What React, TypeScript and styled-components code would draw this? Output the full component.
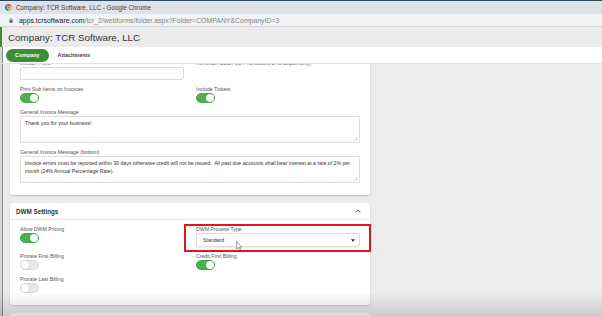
import React from "react";
import styled, { createGlobalStyle } from "styled-components";

const Global = createGlobalStyle`
  html, body { margin: 0; padding: 0; }
  body {
    width: 602px;
    height: 316px;
    overflow: hidden;
    font-family: "Liberation Sans", Arial, sans-serif;
    background: #ececec;
  }
  * { box-sizing: border-box; }
`;

const Window = styled.div`
  width: 602px;
  height: 316px;
  display: flex;
  flex-direction: column;
  overflow: hidden;
  background: #ececec;
`;

const TitleBar = styled.div`
  flex: none;
  height: 14px;
  background: #dee1e6;
  border-top: 1px solid #2f4a66;
  display: flex;
  align-items: center;
  gap: 4px;
  padding-left: 5px;
  font-size: 6.3px;
  color: #3c4043;
`;

const AddressBar = styled.div`
  flex: none;
  height: 13px;
  background: #f1f3f4;
  border-bottom: 1px solid #d6d6d6;
  display: flex;
  align-items: center;
  gap: 6px;
  padding-left: 9px;
  font-size: 6.9px;
  color: #80868b;
`;

const Host = styled.span`
  color: #202124;
`;

const PageHeader = styled.div`
  flex: none;
  height: 20px;
  background: #ebebeb;
  display: flex;
  align-items: center;
  padding-left: 8px;
  font-size: 9.8px;
  color: #333;
  box-shadow: inset 2px 0 0 #3b8f35;
`;

const TabBar = styled.div`
  flex: none;
  height: 17px;
  background: #fff;
  display: flex;
  align-items: center;
  gap: 9px;
  padding-left: 6px;
  border-bottom: 1px solid #e2e2e2;
  box-shadow: inset 2px 0 0 #d5d5d5, inset 3px 0 0 #8a8a8a;
`;

const Tab = styled.span<{ $active?: boolean }>`
  height: 13px;
  display: inline-flex;
  align-items: center;
  justify-content: center;
  padding: ${(p) => (p.$active ? "0 9px" : "0")};
  border-radius: 7px;
  background: ${(p) => (p.$active ? "#3b8f35" : "transparent")};
  color: ${(p) => (p.$active ? "#fff" : "#444")};
  font-size: 5.4px;
  font-weight: bold;
`;

const Content = styled.div`
  flex: 1;
  position: relative;
  overflow: hidden;
  padding-left: 10px;
  box-shadow: inset 2px 0 0 #d5d5d5, inset 3px 0 0 #8a8a8a;

  &::after {
    content: "";
    position: absolute;
    left: 0;
    right: 0;
    bottom: 0;
    height: 24px;
    background: linear-gradient(to bottom, rgba(0, 0, 0, 0), rgba(0, 0, 0, 0.14));
    pointer-events: none;
  }
`;

const Column = styled.div`
  width: 360px;
  margin-top: -14px;
  display: flex;
  flex-direction: column;
  gap: 8px;
`;

const Card = styled.section`
  background: #fff;
  border-radius: 2px;
  box-shadow: 0 1px 2px rgba(0, 0, 0, 0.18);
`;

const CardHeader = styled.div`
  height: 17px;
  display: flex;
  align-items: center;
  justify-content: space-between;
  padding: 0 9px 0 6px;
  border-bottom: 1px solid #e6e6e6;
  font-size: 6.3px;
  font-weight: bold;
  color: #333;
`;

const CardBody = styled.div<{ $top: number }>`
  display: grid;
  grid-template-columns: 164px 164px;
  column-gap: 12px;
  row-gap: 6px;
  align-items: start;
  padding: ${(p) => p.$top}px 10px 12px 10px;
`;

const Field = styled.div<{ $wide?: boolean }>`
  position: relative;
  display: flex;
  flex-direction: column;
  align-items: flex-start;
  grid-column: ${(p) => (p.$wide ? "1 / -1" : "auto")};
`;

const Label = styled.div`
  height: 6px;
  line-height: 6px;
  margin-bottom: 1px;
  font-size: 5.2px;
  color: #555;
  white-space: nowrap;
`;

const Input = styled.div`
  width: 100%;
  height: 13px;
  border: 1px solid #dcdcdc;
  border-radius: 2px;
  background: #fff;
`;

const TextArea = styled.div<{ $h: number }>`
  position: relative;
  width: 100%;
  height: ${(p) => p.$h}px;
  border: 1px solid #dcdcdc;
  border-radius: 2px;
  background: #fff;
  padding: 2px 4px;
  font-size: 5.2px;
  line-height: 8px;
  color: #333;
  white-space: pre-wrap;
`;

const Grip = styled.svg`
  position: absolute;
  right: 1px;
  bottom: 1px;
`;

const Select = styled.div`
  position: relative;
  width: 100%;
  height: 14px;
  border: 1px solid #dcdcdc;
  border-radius: 2px;
  background: #fff;
  box-shadow: 0 1px 1px rgba(0, 0, 0, 0.06);
  display: flex;
  align-items: center;
  justify-content: space-between;
  padding: 0 4px 0 6px;
  font-size: 5.2px;
  color: #333;
`;

const Highlight = styled.div`
  position: absolute;
  left: -12px;
  top: -2px;
  width: 187px;
  height: 28px;
  border: 2px solid #e5131c;
  pointer-events: none;
`;

const Pointer = styled.svg`
  position: absolute;
  left: 39px;
  top: 7px;
`;

const Toggle = styled.span<{ $on?: boolean }>`
  position: relative;
  display: block;
  width: 19px;
  height: 10px;
  border-radius: 5px;
  background: ${(p) => (p.$on ? "#4caf50" : "#e8e8e8")};
  border: 1px solid ${(p) => (p.$on ? "#46a54a" : "#dadada")};

  &::after {
    content: "";
    position: absolute;
    top: 0;
    left: ${(p) => (p.$on ? "9px" : "0")};
    width: 8px;
    height: 8px;
    border-radius: 50%;
    background: #fff;
    box-shadow: 0 0 1px rgba(0, 0, 0, 0.3);
  }
`;

const Spacer = styled.div`
  height: 40px;
`;

const Favicon = () => (
  <svg width="7" height="7" viewBox="0 0 24 24">
    <path d="M12 12 L1.61 6 A12 12 0 0 1 22.39 6 Z" fill="#db4437" />
    <path d="M12 12 L22.39 6 A12 12 0 0 1 12 24 Z" fill="#f4c20d" />
    <path d="M12 12 L12 24 A12 12 0 0 1 1.61 6 Z" fill="#0f9d58" />
    <circle cx="12" cy="12" r="5.6" fill="#fff" />
    <circle cx="12" cy="12" r="4.4" fill="#4285f4" />
  </svg>
);

const Lock = () => (
  <svg width="4" height="5" viewBox="0 0 8 10">
    <path d="M2 4.5 V3 A2 2 0 0 1 6 3 V4.5" fill="none" stroke="#5f6368" strokeWidth="1.4" />
    <rect x="0.5" y="4.5" width="7" height="5" rx="0.8" fill="#5f6368" />
  </svg>
);

const ResizeGrip = () => (
  <Grip width="4" height="4" viewBox="0 0 4 4">
    <path d="M0.5 3.8 L3.8 0.5 M2 3.8 L3.8 2" stroke="#999" strokeWidth="0.5" />
  </Grip>
);

const ChevronUp = () => (
  <svg width="6" height="4" viewBox="0 0 6 4">
    <polyline points="0.8,3.4 3,1.2 5.2,3.4" fill="none" stroke="#444" strokeWidth="1" />
  </svg>
);

const Caret = () => (
  <svg width="4" height="3" viewBox="0 0 4 3">
    <path d="M0 0.2 H4 L2 2.8 Z" fill="#222" />
  </svg>
);

const MouseCursor = () => (
  <Pointer width="7" height="10" viewBox="0 0 7 10">
    <path
      d="M0.6 0.6 L0.6 8 L2.3 6.5 L3.5 9.2 L4.7 8.7 L3.5 6 L5.8 6 Z"
      fill="#fff"
      stroke="#555"
      strokeWidth="0.6"
      strokeLinejoin="round"
    />
  </Pointer>
);

export default function App() {
  return (
    <>
      <Global />
      <Window>
        <TitleBar>
          <Favicon />
          <span>Company: TCR Software, LLC - Google Chrome</span>
        </TitleBar>
        <AddressBar>
          <Lock />
          <span>
            <Host>apps.tcrsoftware.com</Host>/tcr_2/webforms/folder.aspx?Folder=COMPANY&amp;CompanyID=3
          </span>
        </AddressBar>
        <PageHeader>Company: TCR Software, LLC</PageHeader>
        <TabBar>
          <Tab $active>Company</Tab>
          <Tab>Attachments</Tab>
        </TabBar>
        <Content>
          <Column>
            <Card>
              <CardBody $top={10}>
                <Field>
                  <Label>Invoice Prefix</Label>
                  <Input />
                </Field>
                <Field>
                  <Label>Reminder Batch (for Promotions or to Export only)</Label>
                </Field>
                <Field>
                  <Label>Print Sub Items on Invoices</Label>
                  <Toggle $on />
                </Field>
                <Field>
                  <Label>Include Tickets</Label>
                  <Toggle $on />
                </Field>
                <Field $wide>
                  <Label>General Invoice Message</Label>
                  <TextArea $h={27}>
                    Thank you for your business!
                    <ResizeGrip />
                  </TextArea>
                </Field>
                <Field $wide>
                  <Label>General Invoice Message (bottom)</Label>
                  <TextArea $h={27}>
                    Invoice errors must be reported within 30 days otherwise credit will not be issued.  All past due accounts shall bear interest at a rate of 2% per month (24% Annual Percentage Rate).
                    <ResizeGrip />
                  </TextArea>
                </Field>
              </CardBody>
            </Card>

            <Card>
              <CardHeader>
                <span>DWM Settings</span>
                <ChevronUp />
              </CardHeader>
              <CardBody $top={6}>
                <Field>
                  <Label>Allow DWM Pricing</Label>
                  <Toggle $on />
                </Field>
                <Field>
                  <Label>DWM Process Type</Label>
                  <Select>
                    <span>Standard</span>
                    <Caret />
                    <MouseCursor />
                  </Select>
                  <Highlight />
                </Field>
                <Field>
                  <Label>Prorate First Billing</Label>
                  <Toggle />
                </Field>
                <Field>
                  <Label>Credit First Billing</Label>
                  <Toggle $on />
                </Field>
                <Field>
                  <Label>Prorate Last Billing</Label>
                  <Toggle />
                </Field>
              </CardBody>
            </Card>

            <Card>
              <Spacer />
            </Card>
          </Column>
        </Content>
      </Window>
    </>
  );
}
